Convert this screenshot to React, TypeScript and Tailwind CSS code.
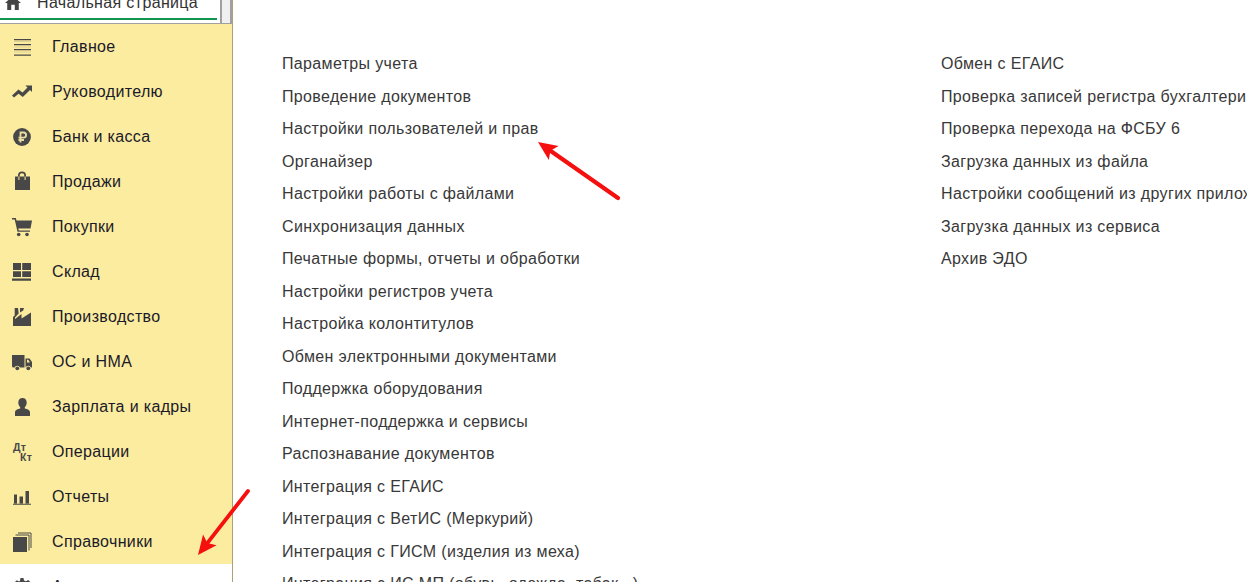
const ICON = "#484848";

function Icon({ name }: { name: string }) {
  const common = { width: 24, height: 24, viewBox: "0 0 24 24", fill: ICON };
  switch (name) {
    case "main":
      return (
        <svg {...common}>
          <path d="M4 4h17v1.200H4zM4 9h17v1.200H4zM4 14h17v1.200H4zM4 19.500h17v1.200H4z" />
          <path d="M4 6h17v1H4zM4 11.500h17v1H4zM4 16.500h17v1H4z" opacity=".15" />
        </svg>
      );
    case "chart":
      return (
        <svg {...common}>
          <path d="M2 15.500 8.500 9.500l4 3 5-5-2.200-2H22V12l-2-2-7.200 7-4.200-3.200L4 17.500z" />
        </svg>
      );
    case "ruble":
      return (
        <svg {...common}>
          <circle cx="12" cy="12" r="8.900" />
          <path fill="none" stroke="#e8dca0" strokeWidth="1.800" d="M10.500 17.500V7.500h3a2.500 2.500 0 0 1 0 5.200H8.500M8.500 15h5.500" />
        </svg>
      );
    case "bag":
      return (
        <svg {...common}>
          <path fillRule="evenodd" d="M5 6.500h3V5.500a4 4 0 0 1 8 0v1h4V20H5zM9.700 6.500h4.600V5.500a2.300 2.300 0 0 0-4.600 0z" />
          <path fill="#fcec9f" d="M8 6.500h1.700v3.500H8zM14.300 6.500H16v3.500h-1.700z" opacity=".6" />
        </svg>
      );
    case "cart":
      return (
        <svg {...common}>
          <path d="M2 3h3.800l.7 2.500H22l-1.500 8H8.300l.5 2H20v1.300H7.500L4.700 4.500H2z" />
          <circle cx="8.700" cy="19.500" r="1.800" />
          <circle cx="17" cy="19.500" r="1.800" />
        </svg>
      );
    case "stock":
      return (
        <svg {...common}>
          <path d="M3 3h8v7H3zM12.200 3H21v7h-8.800zM3 11.200h8V17H3zM12.200 11.200H21V17h-8.800zM2 18.500h19v2.200H2z" />
        </svg>
      );
    case "factory":
      return (
        <svg {...common}>
          <path d="M3 21V12l1.700-1.500V3h3.300l.7 5.500-3.700 4V14l6.500-5v4.500L21 7.500V21z M10 3h4l-.8 2.500-3.200 2z" />
        </svg>
      );
    case "truck":
      return (
        <svg {...common}>
          <path d="M2 5h12.500v12.500H10a3 3 0 0 0-5.500 0H3.500A1.500 1.500 0 0 1 2 16z" />
          <path fillRule="evenodd" d="M15.500 8.500h4l2.500 3.500v5.500h-1a3 3 0 0 0-5.500 0zM17 9.800v2.700h3l-1.800-2.700z" />
          <circle cx="7.300" cy="18.300" r="1.900" />
          <circle cx="18.300" cy="18.300" r="1.900" />
        </svg>
      );
    case "user":
      return (
        <svg {...common}>
          <path d="M12.500 3c2.700 0 4.200 2 4.200 4.600 0 2-.8 3.700-1.900 4.600v1.300c2.600.6 5.200 1.700 5.200 3.500v4H5v-4c0-1.800 2.600-2.900 5.200-3.500v-1.300C9.100 11.300 8.300 9.600 8.300 7.600 8.300 5 9.800 3 12.500 3z" />
        </svg>
      );
    case "dtkt":
      return (
        <svg width="24" height="24" viewBox="0 0 24 24">
          <text x="3" y="11" fontSize="10.500" fontWeight="700" fill={ICON} fontFamily="Liberation Sans, sans-serif">Дт</text>
          <text x="10" y="20.500" fontSize="10.500" fontWeight="700" fill={ICON} fontFamily="Liberation Sans, sans-serif">Кт</text>
        </svg>
      );
    case "bars":
      return (
        <svg {...common}>
          <path d="M4 9.500h3v9H4zM9.500 11.500h3.500v7H9.500zM15.500 6h3.500v12.500h-3.500zM3 18.700h18v1H3z" />
        </svg>
      );
    case "books":
      return (
        <svg {...common}>
          <path d="M3 7h14v15H3z" />
          <path fill="none" stroke={ICON} strokeWidth="1" d="M5.500 5h13.500v15.500M8 3h13v15" />
        </svg>
      );
    case "gear":
      return (
        <svg {...common}>
          <path d="M10.500 3h3l.5 2.500 2 .8 2.200-1.400 2.100 2.100-1.400 2.200.8 2 2.500.5v3l-2.500.5-.8 2 1.400 2.200-2.100 2.100-2.200-1.400-2 .8-.5 2.500h-3l-.5-2.500-2-.8-2.200 1.400-2.100-2.100 1.400-2.200-.8-2L2.800 15v-3l2.500-.5.8-2-1.400-2.200 2.100-2.100L9 6.600l1-.8z" />
        </svg>
      );
    default:
      return null;
  }
}

const side: [string, string][] = [
  ["main", "Главное"],
  ["chart", "Руководителю"],
  ["ruble", "Банк и касса"],
  ["bag", "Продажи"],
  ["cart", "Покупки"],
  ["stock", "Склад"],
  ["factory", "Производство"],
  ["truck", "ОС и НМА"],
  ["user", "Зарплата и кадры"],
  ["dtkt", "Операции"],
  ["bars", "Отчеты"],
  ["books", "Справочники"],
];

const col1 = [
  "Параметры учета",
  "Проведение документов",
  "Настройки пользователей и прав",
  "Органайзер",
  "Настройки работы с файлами",
  "Синхронизация данных",
  "Печатные формы, отчеты и обработки",
  "Настройки регистров учета",
  "Настройка колонтитулов",
  "Обмен электронными документами",
  "Поддержка оборудования",
  "Интернет-поддержка и сервисы",
  "Распознавание документов",
  "Интеграция с ЕГАИС",
  "Интеграция с ВетИС (Меркурий)",
  "Интеграция с ГИСМ (изделия из меха)",
  "Интеграция с ИС МП (обувь, одежда, табак...)",
];

const col2 = [
  "Обмен с ЕГАИС",
  "Проверка записей регистра бухгалтерии",
  "Проверка перехода на ФСБУ 6",
  "Загрузка данных из файла",
  "Настройки сообщений из других приложений",
  "Загрузка данных из сервиса",
  "Архив ЭДО",
];

function Arrow({ x1, y1, x2, y2, w }: { x1: number; y1: number; x2: number; y2: number; w: number }) {
  const a = Math.atan2(y2 - y1, x2 - x1);
  const len = 21;
  const wing = 0.42;
  const bx = x2 - Math.cos(a) * len * 0.72;
  const by = y2 - Math.sin(a) * len * 0.72;
  const p1 = `${x2 - Math.cos(a - wing) * len},${y2 - Math.sin(a - wing) * len}`;
  const p2 = `${x2 - Math.cos(a + wing) * len},${y2 - Math.sin(a + wing) * len}`;
  return (
    <g>
      <line x1={x1} y1={y1} x2={bx} y2={by} stroke="#f50f0f" strokeWidth={w} strokeLinecap="round" />
      <polygon points={`${x2},${y2} ${p1} ${bx},${by} ${p2}`} fill="#f50f0f" />
    </g>
  );
}

export default function App() {
  return (
    <div className="relative flex h-[582px] w-[1247px] overflow-hidden bg-white font-['Liberation_Sans',Arial,sans-serif] tracking-[0.35px]">
      <aside className="flex h-full w-[233px] shrink-0 flex-col overflow-hidden border-r border-[#a8a27a]">
        <div className="flex h-[24px] shrink-0 border-b border-[#a0a0a0] bg-white">
          <div className="mb-[3px] flex h-[20px] w-[217px] items-end overflow-hidden border-b-2 border-[#0f9550] pb-[7px]">
            <span className="ml-[5px] mr-[16px] flex h-[16px] w-[16px] shrink-0 items-center">
              <svg width="18" height="16" viewBox="0 0 18 16" fill="#444444">
                <path d="M9 0 18 8h-2.500v8H11V10H7v6H2.500V8H0z" />
              </svg>
            </span>
            <span className="text-[16px] leading-[17px] text-[#333]">Начальная страница</span>
          </div>
          <div className="ml-[3px] flex-1 border-x-2 border-[#a0a0a0] bg-[#f0f0f0]" />
        </div>
        <nav className="flex shrink-0 flex-col bg-[#fcec9f]">
          {side.map(([icon, label]) => (
            <div key={label} className="flex h-[45px] shrink-0 items-center pl-[10px]">
              <span className="flex h-[24px] w-[24px] items-center justify-center">
                <Icon name={icon} />
              </span>
              <span className="ml-[18px] text-[16px] leading-[20px] text-[#1a1a2a]">{label}</span>
            </div>
          ))}
        </nav>
        <div className="flex h-[45px] shrink-0 items-center bg-white pl-[10px]">
          <span className="flex h-[24px] w-[24px] items-center justify-center">
            <Icon name="gear" />
          </span>
          <span className="ml-[18px] text-[16px] leading-[20px] text-[#1a1a2a]">Администрирование</span>
        </div>
      </aside>
      <main className="flex min-w-0 flex-1 pl-[49px] pt-[48px]">
        <ul className="w-[659px] shrink-0">
          {col1.map((t) => (
            <li key={t} className="h-[32.500px] whitespace-nowrap text-[16px] leading-[32.500px] text-[#383838]">{t}</li>
          ))}
        </ul>
        <ul className="min-w-0 flex-1">
          {col2.map((t) => (
            <li key={t} className="h-[32.500px] whitespace-nowrap text-[16px] leading-[32.500px] text-[#383838]">{t}</li>
          ))}
        </ul>
      </main>
      <svg className="pointer-events-none absolute left-0 top-0" width="1247" height="582">
        <Arrow x1={618} y1={198} x2={538} y2={142} w={4.2} />
        <Arrow x1={248} y1={491} x2={198} y2={555} w={3.8} />
      </svg>
    </div>
  );
}
